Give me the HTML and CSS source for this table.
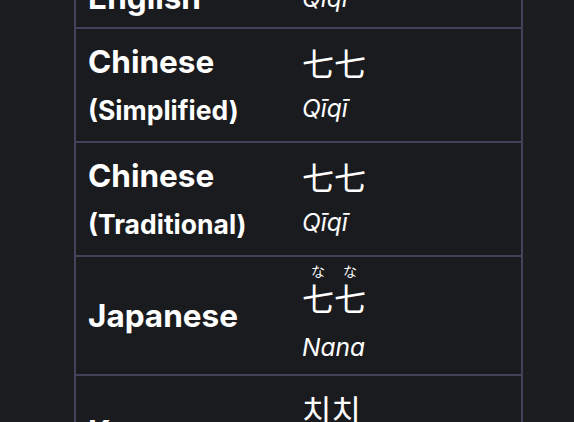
FILE: index.html
```html
<!DOCTYPE html>
<html lang="en">
<head>
<meta charset="utf-8">
<title>Qiqi names</title>
<link rel="stylesheet" href="styles.css">
</head>
<body>
<div class="page">
  <table class="names">
    <tbody>
      <tr class="first">
        <th>English</th>
        <td><span class="rom">Qiqi</span></td>
      </tr>
      <tr>
        <th><span class="lbl">Chinese</span><span class="sub">(Simplified)</span></th>
        <td><span class="native" lang="zh-Hans">七七</span><span class="rom">Qīqī</span></td>
      </tr>
      <tr>
        <th><span class="lbl">Chinese</span><span class="sub">(Traditional)</span></th>
        <td><span class="native" lang="zh-Hant">七七</span><span class="rom">Qīqī</span></td>
      </tr>
      <tr class="ja">
        <th>Japanese</th>
        <td><span class="native" lang="ja"><ruby>七<rt>な</rt></ruby><ruby>七<rt>な</rt></ruby></span><span class="rom">Nana</span></td>
      </tr>
      <tr>
        <th>Korean</th>
        <td><span class="native" lang="ko">치치</span><span class="rom">Chichi</span></td>
      </tr>
    </tbody>
  </table>
</div>
</body>
</html>
```

FILE: styles.css
```css
html, body {
  margin: 0;
  padding: 0;
  background: #1c1d21;
  height: 100%;
  overflow: hidden;
}

.page {
  padding-left: 74px;
  color: #ffffff;
  font-family: Inter, "Noto Sans", sans-serif;
}

.names {
  width: 449px;
  border-collapse: collapse;
  margin-top: -27px;
  background: #1a1b1e;
}

.names th,
.names td {
  border: 2px solid #40435a;
  padding: 10px 12px;
  line-height: 46px;
  vertical-align: middle;
  text-align: left;
}

.names th {
  width: 190px;
  font-size: 31.5px;
  font-weight: 700;
  border-right: none;
}

.names td {
  border-left: none;
}

.names .first th,
.names .first td {
  padding-top: 0;
  padding-bottom: 6px;
}

.lbl,
.sub {
  display: block;
  height: 46px;
}

.sub {
  font-size: 26.5px;
  line-height: 50px;
}

.native {
  display: block;
  height: 46px;
  line-height: 46px;
  font-family: "Noto Sans CJK SC", "Noto Sans CJK JP", "Noto Sans CJK KR", sans-serif;
  font-size: 32px;
  font-weight: 400;
}

.native:lang(ja) {
  font-family: "Noto Sans CJK JP", sans-serif;
}

.native:lang(ko) {
  font-family: "Noto Sans CJK KR", sans-serif;
}

.native rt {
  font-size: 14px;
  line-height: 1;
  position: relative;
  top: -3px;
}

.rom {
  display: block;
  height: 46px;
  line-height: 46px;
  font-size: 24.5px;
  font-style: italic;
  font-weight: 400;
}

.names .ja td {
  padding-bottom: 4px;
}

.ja .native {
  padding-top: 2px;
  line-height: 40px;
}

.ja .rom {
  margin-top: 9px;
}
```
